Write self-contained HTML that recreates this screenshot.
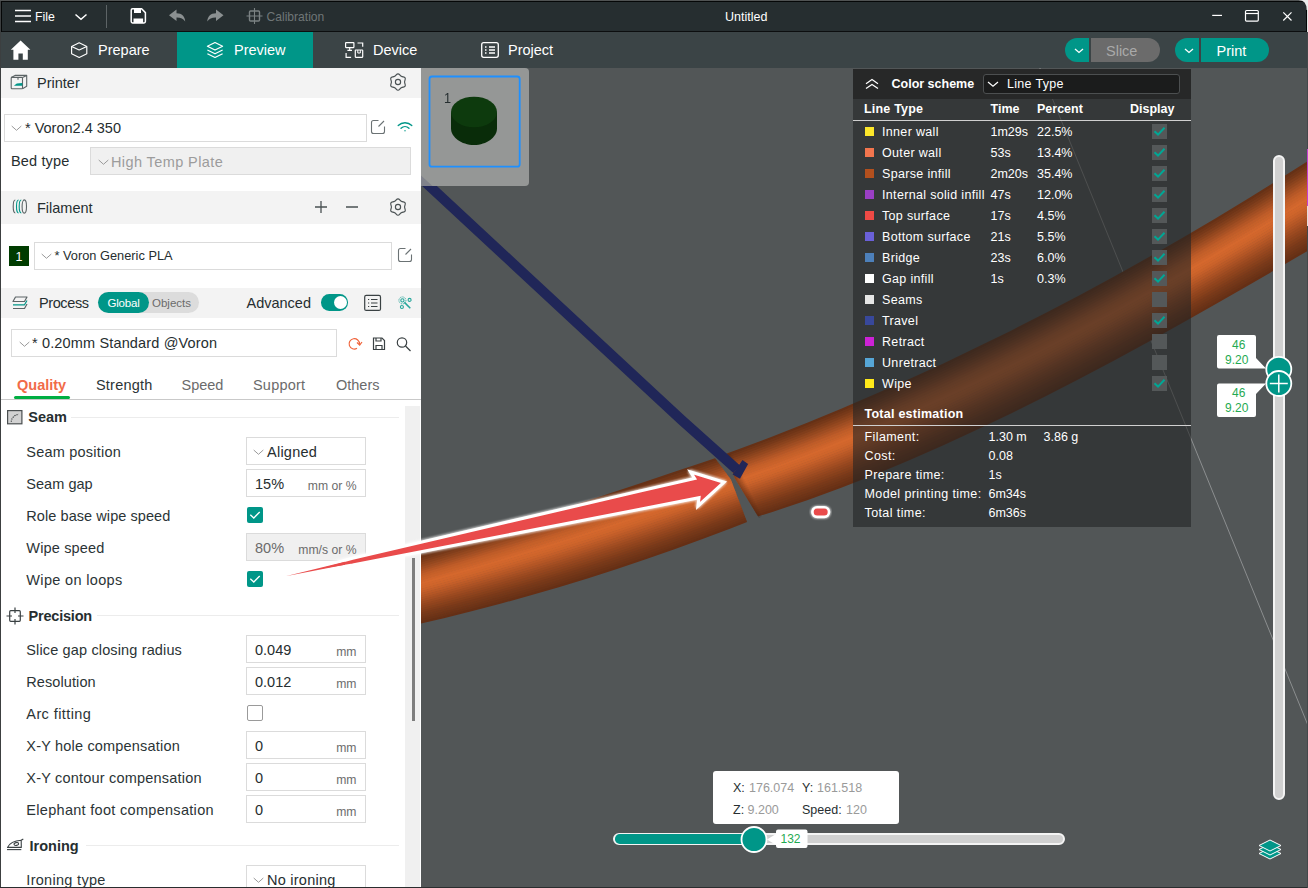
<!DOCTYPE html>
<html><head><meta charset="utf-8"><title>Untitled</title>
<style>
*{box-sizing:border-box;margin:0;padding:0}
html,body{width:1308px;height:888px;overflow:hidden;background:#525657;font-family:"Liberation Sans",sans-serif;color:#262e30}
.abs{position:absolute}
#titlebar{position:absolute;left:0;top:0;width:1308px;height:32px;background:#262e30;border-bottom:1px solid #0c0e0f}
#tabbar{position:absolute;left:0;top:32px;width:1308px;height:36px;background:#3b4446}
#side{position:absolute;left:0;top:68px;width:421px;height:820px;background:#fff;overflow:hidden}
#canvas{position:absolute;left:421px;top:68px;width:887px;height:820px;background:#525657;overflow:hidden}
.t{position:absolute;white-space:nowrap;line-height:1}
.hdr{position:absolute;left:0;width:421px;height:30px;background:#f3f3f3}
.box{position:absolute;border:1px solid #dbdbdb;background:#fff}
.box.dis{background:#f0f0f0}
.lbl{position:absolute;left:24px;font-size:14.5px;color:#2b3436;white-space:nowrap;line-height:1}
.val{position:absolute;font-size:14.5px;color:#262e30;white-space:nowrap;line-height:1}
.unit{position:absolute;font-size:12.2px;color:#6b6b6b;white-space:nowrap;line-height:1}
.chk{position:absolute;width:16px;height:16px;border-radius:2px;background:#009688}
.chk.off{background:#fff;border:1px solid #9a9a9a}
.sec{position:absolute;font-weight:bold;font-size:14.5px;color:#262e30;line-height:1;white-space:nowrap}
.hr{position:absolute;height:1px;background:#ececec}
</style></head><body>
<div id="titlebar">
<svg class="abs" style="left:0;top:0" width="340" height="32" viewBox="0 0 340 32" fill="none">
 <g stroke="#fff" stroke-width="1.6" stroke-linecap="butt"><path d="M15 10.5H31M15 16H31M15 21.5H31"/></g>
 <path d="M75.5 14.5L81 19.3L86.5 14.5" stroke="#fff" stroke-width="1.5"/>
 <path d="M106.5 5V28" stroke="#5d6466" stroke-width="1"/>
 <path d="M131.2 10.2Q131.2 8.8 132.6 8.8H141.6L145.4 12.6V21.6Q145.4 23 144 23H132.6Q131.2 23 131.2 21.6Z" stroke="#fff" stroke-width="1.5"/>
 <rect x="134" y="9" width="7" height="4" fill="#fff"/><rect x="133.5" y="18.5" width="9.6" height="4.5" fill="#fff"/>
 <path d="M169 15.2L176.5 9.6V13.2C182 13.2 185 16.5 185.2 21.6C183.4 18.6 180.6 17.4 176.5 17.5V21Z" fill="#8b9091"/>
 <path d="M223.5 15.2L216 9.6V13.2C210.500 13.2 207.5 16.5 207.3 21.6C209.100 18.6 211.9 17.4 216 17.500V21Z" fill="#8b9091"/>
 <g stroke="#7b8283" stroke-width="1.4"><rect x="249.500" y="11" width="10" height="10" rx="1"/><path d="M254.500 8V24M246.500 16H262.500" stroke-width="1.100"/></g>
</svg>
<div class="t" style="left:35px;top:10.5px;font-size:12.3px;color:#fff">File</div>
<div class="t" style="left:266.500px;top:11px;font-size:12.1px;color:#6f7677">Calibration</div>
<div class="t" style="left:725px;top:11px;font-size:12.5px;color:#fff">Untitled</div>
<svg class="abs" style="left:1200px;top:0" width="108" height="32" viewBox="0 0 108 32" fill="none" stroke="#fff" stroke-width="1.2">
 <path d="M12.200 15.400H22"/><rect x="45.500" y="10.500" width="12.800" height="10.600" rx="1"/><path d="M45.500 13.500H58.300"/><path d="M83.300 12.300L91.500 20.500M91.500 12.300L83.300 20.500"/>
</svg>
</div>
<div id="tabbar">
<div class="abs" style="left:177px;top:0;width:136px;height:36px;background:#009688"></div>
<svg class="abs" style="left:0;top:0" width="600" height="36" viewBox="0 0 600 36" fill="none">
 <path d="M20.600 8.600L30.400 17.800H27.800V27.800H22.800V21.500H18.400V27.800H13.400V17.800H10.800Z" fill="#fff"/>
 <g stroke="#fff" stroke-width="1.150" stroke-linejoin="round"><path d="M79.200 10.800L86.800 14.400V21.800L79.200 25.400L71.600 21.800V14.400Z"/><path d="M71.600 14.400L79.200 18L86.800 14.400"/></g>
 <g stroke="#fff" stroke-width="1.150" stroke-linejoin="round"><path d="M215 10.500L222.600 14.300L215 18.100L207.400 14.300Z"/><path d="M207.400 18L215 21.800L222.600 18"/><path d="M207.400 21.700L215 25.500L222.600 21.700"/></g>
 <g stroke="#fff" stroke-width="1.200"><rect x="345.600" y="10.600" width="8.300" height="5" rx="0.500"/><path d="M349.700 15.600V18.400M347.400 18.400H352"/><rect x="355.300" y="18" width="7.400" height="7.300" rx="0.500"/><path d="M357.800 18V21H360.300V18" stroke-width="1"/><path d="M357.500 11H362.700V14.700M346.100 21.100V25.300H351.100"/></g>
 <g stroke="#fff" stroke-width="1.300"><rect x="481.700" y="10.700" width="16.600" height="14.600" rx="2"/><path d="M485 15H486.500M485 18H486.500M485 21H486.500M489 15H495M489 18H495M489 21H495"/></g>
</svg>
<div class="t" style="left:98px;top:11.300px;font-size:14.500px;color:#fff">Prepare</div>
<div class="t" style="left:234px;top:11.300px;font-size:14.500px;color:#fff">Preview</div>
<div class="t" style="left:373px;top:11.300px;font-size:14.500px;color:#fff">Device</div>
<div class="t" style="left:508px;top:11.300px;font-size:14.500px;color:#fff">Project</div>
<div class="abs" style="left:1065px;top:6px;width:24px;height:24px;background:#009688;border-radius:12px 0 0 12px"></div>
<div class="abs" style="left:1091px;top:6px;width:69px;height:24px;background:#6b6b6b;border-radius:0 12px 12px 0"></div>
<div class="abs" style="left:1175px;top:6px;width:24px;height:24px;background:#009688;border-radius:12px 0 0 12px"></div>
<div class="abs" style="left:1201px;top:6px;width:68px;height:24px;background:#009688;border-radius:0 12px 12px 0"></div>
<svg class="abs" style="left:1060px;top:0" width="160" height="36" viewBox="0 0 160 36" fill="none" stroke="#fff" stroke-width="1.300"><path d="M15 17L19 20.500L23 17"/><path d="M125 17L129 20.500L133 17"/></svg>
<div class="t" style="left:1106px;top:11.800px;font-size:14.500px;color:#a9a9a9">Slice</div>
<div class="t" style="left:1216.500px;top:11.800px;font-size:14.500px;color:#fff">Print</div>
</div>
<div id="side">
<div class="hdr" style="top:0;height:30px"></div>
<div class="t" style="left:37px;top:8px;font-size:14.5px;color:#262e30;">Printer</div>
<svg class="abs" style="left:8px;top:5px" width="22" height="20" viewBox="0 0 22 20" fill="none" stroke="#5c6466" stroke-width="1.100" stroke-linejoin="round"><rect x="3.200" y="4.400" width="11.300" height="11.300" rx="0.800"/><path d="M3.200 4.400L7 2.400H18.700V13.300L14.500 15.700M14.500 4.400L18.700 2.400"/><path d="M5.900 12.700L8.800 10.500L14.300 10.100V12.700Z" fill="#009688" stroke="none"/><path d="M10 4.400V6.800" stroke="#5c6466"/></svg>
<svg class="abs" style="left:389px;top:5px" width="18" height="18" viewBox="0 0 18 18" fill="none" stroke="#4a5153" stroke-width="1.150"><path d="M9.00 0.80C7.46 0.80 7.36 2.33 5.70 3.28C4.04 4.24 2.67 3.57 1.90 4.90C1.13 6.23 2.40 7.09 2.40 9.00C2.40 10.91 1.13 11.77 1.90 13.10C2.67 14.43 4.04 13.76 5.70 14.72C7.36 15.67 7.46 17.20 9.00 17.20C10.54 17.20 10.64 15.67 12.30 14.72C13.96 13.76 15.33 14.43 16.10 13.10C16.87 11.77 15.60 10.91 15.60 9.00C15.60 7.09 16.87 6.23 16.10 4.90C15.33 3.57 13.96 4.24 12.30 3.28C10.64 2.33 10.54 0.80 9.00 0.80Z"/><circle cx="9" cy="9" r="2.600"/></svg>
<div class="box " style="left:4px;top:46px;width:363px;height:28px"></div>
<svg class="abs" style="left:11px;top:57px" width="12" height="7" viewBox="0 0 12 7" fill="none" stroke="#9a9a9a" stroke-width="1"><path d="M0.700 1L5.500 5.300L10.300 1"/></svg>
<div class="t" style="left:25px;top:53px;font-size:14.5px;color:#262e30;">* Voron2.4 350</div>
<svg class="abs" style="left:370px;top:51px" width="16" height="16" viewBox="0 0 16 16" fill="none" stroke="#6b7274" stroke-width="1.100"><path d="M8.500 1.500H3.500Q1.500 1.500 1.500 3.500V12.500Q1.500 14.500 3.500 14.500H12.500Q14.500 14.500 14.500 12.500V7.500"/><path d="M8.500 7.500L14 2"/></svg>
<svg class="abs" style="left:397px;top:53px" width="16" height="12" viewBox="0 0 16 12" fill="none" stroke="#009688" stroke-width="1.300" stroke-linecap="round"><path d="M1.200 4.500C5 0.800 11 0.800 14.800 4.500"/><path d="M4 7.200C6.300 5 9.700 5 12 7.200"/><circle cx="8" cy="9.800" r="0.700" fill="#009688" stroke="none"/></svg>
<div class="t" style="left:11px;top:86px;font-size:14.5px;color:#262e30;letter-spacing:0.15px">Bed type</div>
<div class="box dis" style="left:90px;top:79px;width:321px;height:28px"></div>
<svg class="abs" style="left:97.5px;top:90.5px" width="12" height="7" viewBox="0 0 12 7" fill="none" stroke="#9a9a9a" stroke-width="1"><path d="M0.700 1L5.500 5.300L10.300 1"/></svg>
<div class="t" style="left:111px;top:86.5px;font-size:14.5px;color:#9c9c9c;letter-spacing:0.4px">High Temp Plate</div>
<div class="hdr" style="top:123px;height:32.500px"></div>
<div class="t" style="left:37px;top:132.5px;font-size:14.5px;color:#262e30;">Filament</div>
<svg class="abs" style="left:11px;top:130px" width="18" height="17" viewBox="0 0 18 17" fill="none" stroke-width="1.100"><path d="M4.300 2C2.700 2 2.200 5.200 2.200 8.500C2.200 11.800 2.700 15 4.300 15" stroke="#5c6466"/><path d="M7.600 2C6 2 5.500 5.200 5.500 8.500C5.500 11.800 6 15 7.600 15" stroke="#009688"/><path d="M10.300 2C8.700 2 8.200 5.200 8.200 8.500C8.200 11.800 8.700 15 10.300 15" stroke="#009688"/><ellipse cx="13.300" cy="8.500" rx="2.200" ry="6.600" stroke="#5c6466"/></svg>
<svg class="abs" style="left:312px;top:130px" width="50" height="18" viewBox="0 0 50 18" fill="none" stroke="#4a5153" stroke-width="1.300"><path d="M3 9H15M9 3V15M34 9H46"/></svg>
<svg class="abs" style="left:389px;top:130px" width="18" height="18" viewBox="0 0 18 18" fill="none" stroke="#4a5153" stroke-width="1.150"><path d="M9.00 0.80C7.46 0.80 7.36 2.33 5.70 3.28C4.04 4.24 2.67 3.57 1.90 4.90C1.13 6.23 2.40 7.09 2.40 9.00C2.40 10.91 1.13 11.77 1.90 13.10C2.67 14.43 4.04 13.76 5.70 14.72C7.36 15.67 7.46 17.20 9.00 17.20C10.54 17.20 10.64 15.67 12.30 14.72C13.96 13.76 15.33 14.43 16.10 13.10C16.87 11.77 15.60 10.91 15.60 9.00C15.60 7.09 16.87 6.23 16.10 4.90C15.33 3.57 13.96 4.24 12.30 3.28C10.64 2.33 10.54 0.80 9.00 0.80Z"/><circle cx="9" cy="9" r="2.600"/></svg>
<div class="abs" style="left:9px;top:178px;width:20px;height:20px;background:#003c00"></div>
<div class="t" style="left:15.5px;top:182.5px;font-size:12.5px;color:#fff;">1</div>
<div class="box " style="left:34px;top:174px;width:358px;height:28px"></div>
<svg class="abs" style="left:41px;top:185px" width="12" height="7" viewBox="0 0 12 7" fill="none" stroke="#9a9a9a" stroke-width="1"><path d="M0.700 1L5.500 5.300L10.300 1"/></svg>
<div class="t" style="left:54.5px;top:182px;font-size:12.8px;color:#262e30;">* Voron Generic PLA</div>
<svg class="abs" style="left:397px;top:179px" width="16" height="16" viewBox="0 0 16 16" fill="none" stroke="#6b7274" stroke-width="1.100"><path d="M8.500 1.500H3.500Q1.500 1.500 1.500 3.500V12.500Q1.500 14.500 3.500 14.500H12.500Q14.500 14.500 14.500 12.500V7.500"/><path d="M8.500 7.500L14 2"/></svg>
<div class="hdr" style="top:220px;height:29.500px"></div>
<svg class="abs" style="left:11px;top:226px" width="18" height="18" viewBox="0 0 18 18" fill="none" stroke-width="1.200" stroke-linejoin="round"><path d="M4.500 3H16L13.500 7.500H2Z" stroke="#5c6466"/><path d="M2 10.800H13.500L16 6.500" stroke="#009688"/><path d="M2 14.500H13.500L16 10" stroke="#5c6466"/></svg>
<div class="t" style="left:39px;top:228px;font-size:14.5px;color:#262e30;letter-spacing:-0.4px">Process</div>
<div class="abs" style="left:97.5px;top:224px;width:101.500px;height:21px;border-radius:10.500px;background:#dcdcdc"></div>
<div class="abs" style="left:97.5px;top:224px;width:51.500px;height:21px;border-radius:10.500px;background:#009688"></div>
<div class="t" style="left:107.5px;top:229.5px;font-size:11.5px;color:#fff;letter-spacing:-0.2px">Global</div>
<div class="t" style="left:152px;top:229.5px;font-size:11.5px;color:#6b6b6b;">Objects</div>
<div class="t" style="left:246.5px;top:228px;font-size:14.5px;color:#262e30;">Advanced</div>
<div class="abs" style="left:321px;top:226px;width:27.200px;height:16.500px;border-radius:8.250px;background:#009688"></div>
<div class="abs" style="left:333.700px;top:227.5px;width:13px;height:13.500px;border-radius:6.750px;background:#fff"></div>
<svg class="abs" style="left:363px;top:225px" width="20" height="19" viewBox="0 0 20 19" fill="none" stroke="#3a4143" stroke-width="1.200"><rect x="1.700" y="2.400" width="15.800" height="15" rx="1.500"/><path d="M5 6.500H6.200M5 10H6.200M5 13.500H6.200M8 6.500H14.500M8 10H14.500M8 13.500H14.500"/></svg>
<svg class="abs" style="left:397px;top:227px" width="16" height="16" viewBox="0 0 16 16" fill="none" stroke="#26a69a" stroke-width="1.100"><circle cx="5.400" cy="5.400" r="1.600"/><circle cx="5.400" cy="5.400" r="3.500" stroke-width="0.900" stroke-dasharray="1.100 0.800"/><circle cx="12.600" cy="4.900" r="1.500"/><circle cx="4.900" cy="12" r="1.500"/><path d="M7.400 7.400L13.300 13.300" stroke-width="1.500"/></svg>
<div class="box " style="left:11px;top:261px;width:325.5px;height:28px"></div>
<svg class="abs" style="left:18.5px;top:272.5px" width="12" height="7" viewBox="0 0 12 7" fill="none" stroke="#9a9a9a" stroke-width="1"><path d="M0.700 1L5.500 5.300L10.300 1"/></svg>
<div class="t" style="left:32px;top:268px;font-size:14.5px;color:#262e30;letter-spacing:0.15px">* 0.20mm Standard @Voron</div>
<svg class="abs" style="left:346px;top:267px" width="70" height="18" viewBox="0 0 70 18" fill="none" stroke-width="1.200"><path d="M13.500 9A5.200 5.200 0 1 0 11 13.300" stroke="#f0643c"/><path d="M11 7.500L13.700 10.200L16 7" stroke="#f0643c"/><path d="M27.500 3H36L38.500 5.500V14.500H27.500Z" stroke="#3a4143"/><path d="M30 3V6H35V3M30 14.500V10.500H36V14.500" stroke="#3a4143"/><circle cx="56" cy="7.500" r="4.700" stroke="#3a4143"/><path d="M59.500 11L64.500 16" stroke="#3a4143"/></svg>
<div class="t" style="left:17px;top:309.5px;font-size:14.5px;color:#f16b48;font-weight:bold">Quality</div>
<div class="abs" style="left:14px;top:328px;width:56px;height:3px;border-radius:1.500px;background:#00ae42"></div>
<div class="t" style="left:96px;top:309.5px;font-size:14.5px;color:#2b3436;letter-spacing:0.2px">Strength</div>
<div class="t" style="left:181.5px;top:309.5px;font-size:14.5px;color:#6b6b6b;">Speed</div>
<div class="t" style="left:253px;top:309.5px;font-size:14.5px;color:#6b6b6b;letter-spacing:0.2px">Support</div>
<div class="t" style="left:336px;top:309.5px;font-size:14.5px;color:#6b6b6b;">Others</div>
<div class="abs" style="left:0;top:331px;width:421px;height:1px;background:#c9c9c9"></div>
<div class="abs" style="left:405px;top:338px;width:15px;height:490px;background:#f0f0f0"></div>
<div class="abs" style="left:412px;top:490px;width:2.500px;height:163px;background:#7d7d7d"></div>
<svg class="abs" style="left:7px;top:342px" width="16" height="15" viewBox="0 0 16 15" fill="none"><rect x="0.600" y="0.600" width="14.300" height="13.200" fill="#d2d2d2" stroke="#4a4f50" stroke-width="1.200"/><path d="M4.300 11.800C4.300 8 7 5.500 11.800 4" stroke="#33383a" stroke-width="1.100" stroke-dasharray="1.200 1.100"/></svg>
<div class="t" style="left:28.3px;top:342px;font-size:14.5px;color:#262e30;font-weight:bold">Seam</div>
<div class="hr" style="left:71px;top:348.9px;width:328px"></div>
<div class="t" style="left:26.3px;top:377px;font-size:14.5px;color:#2b3436;letter-spacing:0.22px">Seam position</div>
<div class="box " style="left:246px;top:369px;width:120px;height:28px"></div>
<svg class="abs" style="left:252.5px;top:380.5px" width="12" height="7" viewBox="0 0 12 7" fill="none" stroke="#9a9a9a" stroke-width="1"><path d="M0.700 1L5.500 5.300L10.300 1"/></svg>
<div class="t" style="left:267px;top:376.5px;font-size:14.5px;color:#262e30;letter-spacing:0.25px">Aligned</div>
<div class="t" style="left:26.3px;top:409px;font-size:14.5px;color:#2b3436;letter-spacing:0.04px">Seam gap</div>
<div class="box " style="left:246px;top:401px;width:120px;height:28px"></div>
<div class="t" style="left:255px;top:408.5px;font-size:14.5px;color:#262e30;">15%</div>
<div class="unit" style="right:64.5px;top:411.5px">mm or %</div>
<div class="t" style="left:26.3px;top:441px;font-size:14.5px;color:#2b3436;letter-spacing:0.07px">Role base wipe speed</div>
<div class="chk" style="left:247px;top:439px"><svg width="16" height="16" viewBox="0 0 16 16" fill="none" stroke="#fff" stroke-width="1.300"><path d="M3.300 7.800L6.800 11L12.700 5"/></svg></div>
<div class="t" style="left:26.3px;top:473px;font-size:14.5px;color:#2b3436;letter-spacing:0.16px">Wipe speed</div>
<div class="box dis" style="left:246px;top:465px;width:120px;height:28px"></div>
<div class="t" style="left:255px;top:472.5px;font-size:14.5px;color:#6b6b6b;">80%</div>
<div class="unit" style="right:64.5px;top:475.5px">mm/s or %</div>
<div class="t" style="left:26.3px;top:505px;font-size:14.5px;color:#2b3436;letter-spacing:0.34px">Wipe on loops</div>
<div class="chk" style="left:247px;top:503px"><svg width="16" height="16" viewBox="0 0 16 16" fill="none" stroke="#fff" stroke-width="1.300"><path d="M3.300 7.800L6.800 11L12.700 5"/></svg></div>
<svg class="abs" style="left:6px;top:539px" width="18" height="18" viewBox="0 0 18 18" fill="none" stroke="#3a4143" stroke-width="1.200"><rect x="3.700" y="3.700" width="10.600" height="10.600" rx="1"/><path d="M9 0.500V6M9 12V17.500M0.500 9H6M12 9H17.500"/></svg>
<div class="t" style="left:28.5px;top:541px;font-size:14.5px;color:#262e30;font-weight:bold;letter-spacing:-0.2px">Precision</div>
<div class="hr" style="left:97px;top:547px;width:302px"></div>
<div class="t" style="left:26.3px;top:575px;font-size:14.5px;color:#2b3436;letter-spacing:0.14px">Slice gap closing radius</div>
<div class="box " style="left:246px;top:567px;width:120px;height:28px"></div>
<div class="t" style="left:255px;top:574.5px;font-size:14.5px;color:#262e30;">0.049</div>
<div class="unit" style="right:64.5px;top:577.5px">mm</div>
<div class="t" style="left:26.3px;top:607px;font-size:14.5px;color:#2b3436;letter-spacing:0.09px">Resolution</div>
<div class="box " style="left:246px;top:599px;width:120px;height:28px"></div>
<div class="t" style="left:255px;top:606.5px;font-size:14.5px;color:#262e30;">0.012</div>
<div class="unit" style="right:64.5px;top:609.5px">mm</div>
<div class="t" style="left:26.3px;top:639px;font-size:14.5px;color:#2b3436;letter-spacing:0.41px">Arc fitting</div>
<div class="chk off" style="left:247px;top:637px"></div>
<div class="t" style="left:26.3px;top:671px;font-size:14.5px;color:#2b3436;letter-spacing:0.19px">X-Y hole compensation</div>
<div class="box " style="left:246px;top:663px;width:120px;height:28px"></div>
<div class="t" style="left:255px;top:670.5px;font-size:14.5px;color:#262e30;">0</div>
<div class="unit" style="right:64.5px;top:673.5px">mm</div>
<div class="t" style="left:26.3px;top:703px;font-size:14.5px;color:#2b3436;letter-spacing:0.2px">X-Y contour compensation</div>
<div class="box " style="left:246px;top:695px;width:120px;height:28px"></div>
<div class="t" style="left:255px;top:702.5px;font-size:14.5px;color:#262e30;">0</div>
<div class="unit" style="right:64.5px;top:705.5px">mm</div>
<div class="t" style="left:26.3px;top:735px;font-size:14.5px;color:#2b3436;letter-spacing:0.3px">Elephant foot compensation</div>
<div class="box " style="left:246px;top:727px;width:120px;height:28px"></div>
<div class="t" style="left:255px;top:734.5px;font-size:14.5px;color:#262e30;">0</div>
<div class="unit" style="right:64.5px;top:737.5px">mm</div>
<svg class="abs" style="left:6px;top:770px" width="19" height="13" viewBox="0 0 19 13" fill="none" stroke="#3a4143" stroke-width="1.100" stroke-linejoin="round"><path d="M1 11.600H15.300"/><path d="M1.500 9.400C3.500 5.200 8 2.600 15.200 2.200L15.300 9.400Z"/><ellipse cx="10.300" cy="6" rx="2.300" ry="1.400" transform="rotate(-12 10.300 6)"/><path d="M15.200 2.200L17.300 1"/></svg>
<div class="t" style="left:29.5px;top:771px;font-size:14.5px;color:#262e30;font-weight:bold">Ironing</div>
<div class="hr" style="left:86px;top:777px;width:313px"></div>
<div class="t" style="left:26.3px;top:805px;font-size:14.5px;color:#2b3436;letter-spacing:0.3px">Ironing type</div>
<div class="box " style="left:246px;top:797px;width:120px;height:28px"></div>
<svg class="abs" style="left:252.5px;top:808.5px" width="12" height="7" viewBox="0 0 12 7" fill="none" stroke="#9a9a9a" stroke-width="1"><path d="M0.700 1L5.500 5.300L10.300 1"/></svg>
<div class="t" style="left:267px;top:804.5px;font-size:14.5px;color:#262e30;letter-spacing:0.25px">No ironing</div>
</div>
<div id="canvas">
<svg class="abs" style="left:0;top:0" width="887" height="820" viewBox="0 0 887 820">
<path d="M617.2 -4L887.4 658.4" stroke="#9a9d9e" stroke-width="0.800" fill="none"/>
<defs><clipPath id="cL"><polygon points="-21.0,362.0 288.0,362.0 290.0,384.5 294.1,390.2 309.9,411.5 326.4,454.9 328.0,459.0 328.0,572.0 -21.0,572.0"/></clipPath><clipPath id="cR"><polygon points="303.5,372.0 305.8,386.8 313.6,410.0 338.0,450.0 340.0,453.5 340.0,472.0 899.0,472.0 899.0,32.0 303.5,32.0"/></clipPath></defs>
<g clip-path="url(#cL)">
<polygon points="-6.0,487.8 22.8,478.8 51.5,469.7 80.2,460.5 109.0,451.3 137.8,442.0 166.5,432.6 195.2,423.2 224.0,413.7 252.8,404.1 281.5,394.5 310.2,384.8 339.0,375.0 339.0,377.9 310.2,387.7 281.5,397.5 252.8,407.1 224.0,416.7 195.2,426.2 166.5,435.7 137.8,445.0 109.0,454.3 80.2,463.5 51.5,472.6 22.8,481.6 -6.0,490.5" fill="rgb(102,49,22)"/>
<polygon points="-6.0,489.9 22.8,481.0 51.5,472.0 80.2,462.9 109.0,453.7 137.8,444.4 166.5,435.1 195.2,425.6 224.0,416.1 252.8,406.5 281.5,396.9 310.2,387.1 339.0,377.3 339.0,380.2 310.2,390.1 281.5,399.9 252.8,409.6 224.0,419.2 195.2,428.7 166.5,438.1 137.8,447.4 109.0,456.7 80.2,465.8 51.5,474.9 22.8,483.8 -6.0,492.7" fill="rgb(111,53,23)"/>
<polygon points="-6.0,492.1 22.8,483.2 51.5,474.3 80.2,465.2 109.0,456.1 137.8,446.8 166.5,437.5 195.2,428.1 224.0,418.6 252.8,409.0 281.5,399.3 310.2,389.5 339.0,379.6 339.0,382.5 310.2,392.4 281.5,402.3 252.8,412.0 224.0,421.6 195.2,431.1 166.5,440.5 137.8,449.8 109.0,459.0 80.2,468.2 51.5,477.2 22.8,486.1 -6.0,494.9" fill="rgb(119,57,25)"/>
<polygon points="-6.0,494.3 22.8,485.5 51.5,476.6 80.2,467.6 109.0,458.4 137.8,449.2 166.5,439.9 195.2,430.5 224.0,421.0 252.8,411.4 281.5,401.7 310.2,391.8 339.0,381.9 339.0,384.8 310.2,394.8 281.5,404.6 252.8,414.4 224.0,424.0 195.2,433.5 166.5,443.0 137.8,452.2 109.0,461.4 80.2,470.5 51.5,479.5 22.8,488.3 -6.0,497.0" fill="rgb(129,62,27)"/>
<polygon points="-6.0,496.4 22.8,487.7 51.5,478.9 80.2,469.9 109.0,460.8 137.8,451.6 166.5,442.4 195.2,432.9 224.0,423.4 252.8,413.8 281.5,404.0 310.2,394.2 339.0,384.2 339.0,387.1 310.2,397.1 281.5,407.0 252.8,416.8 224.0,426.5 195.2,436.0 166.5,445.4 137.8,454.7 109.0,463.8 80.2,472.8 51.5,481.7 22.8,490.5 -6.0,499.2" fill="rgb(139,67,29)"/>
<polygon points="-6.0,498.6 22.8,489.9 51.5,481.1 80.2,472.2 109.0,463.2 137.8,454.1 166.5,444.8 195.2,435.4 224.0,425.9 252.8,416.2 281.5,406.4 310.2,396.5 339.0,386.5 339.0,389.4 310.2,399.5 281.5,409.4 252.8,419.2 224.0,428.9 195.2,438.4 166.5,447.8 137.8,457.1 109.0,466.2 80.2,475.2 51.5,484.0 22.8,492.8 -6.0,501.3" fill="rgb(149,72,31)"/>
<polygon points="-6.0,500.7 22.8,492.2 51.5,483.4 80.2,474.6 109.0,465.6 137.8,456.5 166.5,447.2 195.2,437.8 224.0,428.3 252.8,418.6 281.5,408.8 310.2,398.9 339.0,388.8 339.0,391.7 310.2,401.9 281.5,411.8 252.8,421.7 224.0,431.3 195.2,440.9 166.5,450.2 137.8,459.5 109.0,468.6 80.2,477.5 51.5,486.3 22.8,495.0 -6.0,503.5" fill="rgb(160,77,34)"/>
<polygon points="-6.0,502.9 22.8,494.4 51.5,485.7 80.2,476.9 109.0,468.0 137.8,458.9 166.5,449.6 195.2,440.3 224.0,430.7 252.8,421.1 281.5,411.2 310.2,401.3 339.0,391.1 339.0,394.1 310.2,404.2 281.5,414.2 252.8,424.1 224.0,433.8 195.2,443.3 166.5,452.7 137.8,461.9 109.0,471.0 80.2,479.9 51.5,488.6 22.8,497.2 -6.0,505.7" fill="rgb(170,82,36)"/>
<polygon points="-6.0,505.1 22.8,496.6 51.5,488.0 80.2,479.3 109.0,470.4 137.8,461.3 166.5,452.1 195.2,442.7 224.0,433.2 252.8,423.5 281.5,413.6 310.2,403.6 339.0,393.5 339.0,396.4 310.2,406.6 281.5,416.6 252.8,426.5 224.0,436.2 195.2,445.7 166.5,455.1 137.8,464.3 109.0,473.3 80.2,482.2 51.5,490.9 22.8,499.4 -6.0,507.8" fill="rgb(181,87,38)"/>
<polygon points="-6.0,507.2 22.8,498.8 51.5,490.3 80.2,481.6 109.0,472.7 137.8,463.7 166.5,454.5 195.2,445.1 224.0,435.6 252.8,425.9 281.5,416.0 310.2,406.0 339.0,395.8 339.0,398.7 310.2,408.9 281.5,419.0 252.8,428.9 224.0,438.6 195.2,448.2 166.5,457.5 137.8,466.7 109.0,475.7 80.2,484.6 51.5,493.2 22.8,501.7 -6.0,510.0" fill="rgb(191,92,40)"/>
<polygon points="-6.0,509.4 22.8,501.1 51.5,492.6 80.2,484.0 109.0,475.1 137.8,466.1 166.5,456.9 195.2,447.6 224.0,438.0 252.8,428.3 281.5,418.4 310.2,408.3 339.0,398.1 339.0,401.0 310.2,411.3 281.5,421.4 252.8,431.3 224.0,441.1 195.2,450.6 166.5,460.0 137.8,469.1 109.0,478.1 80.2,486.9 51.5,495.5 22.8,503.9 -6.0,512.1" fill="rgb(197,96,41)"/>
<polygon points="-6.0,511.5 22.8,503.3 51.5,494.9 80.2,486.3 109.0,477.5 137.8,468.5 166.5,459.4 195.2,450.0 224.0,440.5 252.8,430.7 281.5,420.8 310.2,410.7 339.0,400.4 339.0,403.3 310.2,413.6 281.5,423.8 252.8,433.8 224.0,443.5 195.2,453.1 166.5,462.4 137.8,471.6 109.0,480.5 80.2,489.2 51.5,497.8 22.8,506.1 -6.0,514.3" fill="rgb(202,98,42)"/>
<polygon points="-6.0,513.7 22.8,505.5 51.5,497.2 80.2,488.6 109.0,479.9 137.8,471.0 166.5,461.8 195.2,452.5 224.0,442.9 252.8,433.2 281.5,423.2 310.2,413.0 339.0,402.7 339.0,405.6 310.2,416.0 281.5,426.2 252.8,436.2 224.0,445.9 195.2,455.5 166.5,464.8 137.8,474.0 109.0,482.9 80.2,491.6 51.5,500.1 22.8,508.4 -6.0,516.4" fill="rgb(208,101,44)"/>
<polygon points="-6.0,515.8 22.8,507.8 51.5,499.5 80.2,491.0 109.0,482.3 137.8,473.4 166.5,464.2 195.2,454.9 224.0,445.3 252.8,435.6 281.5,425.6 310.2,415.4 339.0,405.0 339.0,407.9 310.2,418.4 281.5,428.6 252.8,438.6 224.0,448.4 195.2,457.9 166.5,467.3 137.8,476.4 109.0,485.3 80.2,493.9 51.5,502.4 22.8,510.6 -6.0,518.6" fill="rgb(213,104,45)"/>
<polygon points="-6.0,518.0 22.8,510.0 51.5,501.8 80.2,493.3 109.0,484.7 137.8,475.8 166.5,466.7 195.2,457.3 224.0,447.8 252.8,438.0 281.5,428.0 310.2,417.8 339.0,407.3 339.0,410.2 310.2,420.7 281.5,431.0 252.8,441.0 224.0,450.8 195.2,460.4 166.5,469.7 137.8,478.8 109.0,487.7 80.2,496.3 51.5,504.7 22.8,512.8 -6.0,520.8" fill="rgb(210,102,44)"/>
<polygon points="-6.0,520.2 22.8,512.2 51.5,504.1 80.2,495.7 109.0,487.1 137.8,478.2 166.5,469.1 195.2,459.8 224.0,450.2 252.8,440.4 281.5,430.4 310.2,420.1 339.0,409.6 339.0,412.5 310.2,423.1 281.5,433.4 252.8,443.4 224.0,453.2 195.2,462.8 166.5,472.1 137.8,481.2 109.0,490.0 80.2,498.6 51.5,507.0 22.8,515.1 -6.0,522.9" fill="rgb(207,101,43)"/>
<polygon points="-6.0,522.3 22.8,514.5 51.5,506.4 80.2,498.0 109.0,489.4 137.8,480.6 166.5,471.5 195.2,462.2 224.0,452.6 252.8,442.8 281.5,432.8 310.2,422.5 339.0,411.9 339.0,414.8 310.2,425.4 281.5,435.8 252.8,445.9 224.0,455.7 195.2,465.2 166.5,474.6 137.8,483.6 109.0,492.4 80.2,501.0 51.5,509.3 22.8,517.3 -6.0,525.1" fill="rgb(202,98,42)"/>
<polygon points="-6.0,524.5 22.8,516.7 51.5,508.7 80.2,500.4 109.0,491.8 137.8,483.0 166.5,474.0 195.2,464.6 224.0,455.1 252.8,445.3 281.5,435.2 310.2,424.8 339.0,414.2 339.0,417.2 310.2,427.8 281.5,438.2 252.8,448.3 224.0,458.1 195.2,467.7 166.5,477.0 137.8,486.0 109.0,494.8 80.2,503.3 51.5,511.6 22.8,519.5 -6.0,527.2" fill="rgb(195,94,41)"/>
<polygon points="-6.0,526.6 22.8,518.9 51.5,511.0 80.2,502.7 109.0,494.2 137.8,485.4 166.5,476.4 195.2,467.1 224.0,457.5 252.8,447.7 281.5,437.6 310.2,427.2 339.0,416.6 339.0,419.5 310.2,430.2 281.5,440.6 252.8,450.7 224.0,460.5 195.2,470.1 166.5,479.4 137.8,488.4 109.0,497.2 80.2,505.7 51.5,513.8 22.8,521.8 -6.0,529.4" fill="rgb(187,90,39)"/>
<polygon points="-6.0,528.8 22.8,521.2 51.5,513.2 80.2,505.1 109.0,496.6 137.8,487.8 166.5,478.8 195.2,469.5 224.0,459.9 252.8,450.1 281.5,440.0 310.2,429.6 339.0,418.9 339.0,421.8 310.2,432.5 281.5,443.0 252.8,453.1 224.0,463.0 195.2,472.6 166.5,481.9 137.8,490.9 109.0,499.6 80.2,508.0 51.5,516.1 22.8,524.0 -6.0,531.6" fill="rgb(180,86,37)"/>
<polygon points="-6.0,531.0 22.8,523.4 51.5,515.5 80.2,507.4 109.0,499.0 137.8,490.3 166.5,481.3 195.2,472.0 224.0,462.4 252.8,452.5 281.5,442.4 310.2,431.9 339.0,421.2 339.0,424.1 310.2,434.9 281.5,445.4 252.8,455.5 224.0,465.4 195.2,475.0 166.5,484.3 137.8,493.3 109.0,502.0 80.2,510.3 51.5,518.4 22.8,526.2 -6.0,533.7" fill="rgb(172,82,36)"/>
<polygon points="-6.0,533.1 22.8,525.6 51.5,517.8 80.2,509.7 109.0,501.4 137.8,492.7 166.5,483.7 195.2,474.4 224.0,464.8 252.8,454.9 281.5,444.8 310.2,434.3 339.0,423.5 339.0,426.4 310.2,437.2 281.5,447.7 252.8,458.0 224.0,467.8 195.2,477.4 166.5,486.7 137.8,495.7 109.0,504.3 80.2,512.7 51.5,520.7 22.8,528.5 -6.0,535.9" fill="rgb(164,78,34)"/>
<polygon points="-6.0,535.3 22.8,527.9 51.5,520.1 80.2,512.1 109.0,503.7 137.8,495.1 166.5,486.1 195.2,476.8 224.0,467.2 252.8,457.4 281.5,447.1 310.2,436.6 339.0,425.8 339.0,428.7 310.2,439.6 281.5,450.1 252.8,460.4 224.0,470.3 195.2,479.9 166.5,489.1 137.8,498.1 109.0,506.7 80.2,515.0 51.5,523.0 22.8,530.7 -6.0,538.0" fill="rgb(156,74,32)"/>
<polygon points="-6.0,537.4 22.8,530.1 51.5,522.4 80.2,514.4 109.0,506.1 137.8,497.5 166.5,488.5 195.2,479.3 224.0,469.7 252.8,459.8 281.5,449.5 310.2,439.0 339.0,428.1 339.0,431.0 310.2,441.9 281.5,452.5 252.8,462.8 224.0,472.7 195.2,482.3 166.5,491.6 137.8,500.5 109.0,509.1 80.2,517.4 51.5,525.3 22.8,532.9 -6.0,540.2" fill="rgb(149,70,30)"/>
<polygon points="-6.0,539.6 22.8,532.3 51.5,524.7 80.2,516.8 109.0,508.5 137.8,499.9 166.5,491.0 195.2,481.7 224.0,472.1 252.8,462.2 281.5,451.9 310.2,441.3 339.0,430.4 339.0,433.3 310.2,444.3 281.5,454.9 252.8,465.2 224.0,475.2 195.2,484.8 166.5,494.0 137.8,502.9 109.0,511.5 80.2,519.7 51.5,527.6 22.8,535.1 -6.0,542.3" fill="rgb(142,67,29)"/>
<polygon points="-6.0,541.7 22.8,534.5 51.5,527.0 80.2,519.1 109.0,510.9 137.8,502.3 166.5,493.4 195.2,484.2 224.0,474.6 252.8,464.6 281.5,454.3 310.2,443.7 339.0,432.7 339.0,435.6 310.2,446.7 281.5,457.3 252.8,467.6 224.0,477.6 195.2,487.2 166.5,496.4 137.8,505.3 109.0,513.9 80.2,522.1 51.5,529.9 22.8,537.4 -6.0,544.5" fill="rgb(135,64,27)"/>
<polygon points="-6.0,543.9 22.8,536.8 51.5,529.3 80.2,521.5 109.0,513.3 137.8,504.7 166.5,495.8 195.2,486.6 224.0,477.0 252.8,467.0 281.5,456.7 310.2,446.1 339.0,435.0 339.0,438.0 310.2,449.0 281.5,459.7 252.8,470.1 224.0,480.0 195.2,489.6 166.5,498.9 137.8,507.7 109.0,516.3 80.2,524.4 51.5,532.2 22.8,539.6 -6.0,546.7" fill="rgb(128,60,26)"/>
<polygon points="-6.0,546.1 22.8,539.0 51.5,531.6 80.2,523.8 109.0,515.7 137.8,507.1 166.5,498.3 195.2,489.0 224.0,479.4 252.8,469.5 281.5,459.1 310.2,448.4 339.0,437.4 339.0,440.3 310.2,451.4 281.5,462.1 252.8,472.5 224.0,482.5 195.2,492.1 166.5,501.3 137.8,510.2 109.0,518.6 80.2,526.8 51.5,534.5 22.8,541.8 -6.0,548.8" fill="rgb(121,57,25)"/>
<polygon points="-6.0,548.2 22.8,541.2 51.5,533.9 80.2,526.2 109.0,518.0 137.8,509.6 166.5,500.7 195.2,491.5 224.0,481.9 252.8,471.9 281.5,461.5 310.2,450.8 339.0,439.7 339.0,442.6 310.2,453.7 281.5,464.5 252.8,474.9 224.0,484.9 195.2,494.5 166.5,503.7 137.8,512.6 109.0,521.0 80.2,529.1 51.5,536.8 22.8,544.1 -6.0,551.0" fill="rgb(116,55,24)"/>
<polygon points="-6.0,550.4 22.8,543.5 51.5,536.2 80.2,528.5 109.0,520.4 137.8,512.0 166.5,503.1 195.2,493.9 224.0,484.3 252.8,474.3 281.5,463.9 310.2,453.1 339.0,442.0 339.0,444.9 310.2,456.1 281.5,466.9 252.8,477.3 224.0,487.3 195.2,496.9 166.5,506.2 137.8,515.0 109.0,523.4 80.2,531.4 51.5,539.1 22.8,546.3 -6.0,553.1" fill="rgb(111,52,23)"/>
<polygon points="-6.0,552.5 22.8,545.7 51.5,538.5 80.2,530.8 109.0,522.8 137.8,514.4 166.5,505.6 195.2,496.3 224.0,486.7 252.8,476.7 281.5,466.3 310.2,455.5 339.0,444.3 339.0,447.2 310.2,458.4 281.5,469.3 252.8,479.7 224.0,489.8 195.2,499.4 166.5,508.6 137.8,517.4 109.0,525.8 80.2,533.8 51.5,541.4 22.8,548.5 -6.0,555.3" fill="rgb(106,50,22)"/>
<polygon points="-6.0,554.7 22.8,547.9 51.5,540.8 80.2,533.2 109.0,525.2 137.8,516.8 166.5,508.0 195.2,498.8 224.0,489.2 252.8,479.1 281.5,468.7 310.2,457.8 339.0,446.6 339.0,448.9 310.2,460.2 281.5,471.1 252.8,481.6 224.0,491.6 195.2,501.2 166.5,510.4 137.8,519.2 109.0,527.6 80.2,535.5 51.5,543.1 22.8,550.2 -6.0,556.9" fill="rgb(101,47,21)"/>
</g>
<g clip-path="url(#cR)">
<polygon points="284.0,393.4 318.1,381.1 352.1,368.2 386.2,354.7 420.2,340.7 454.3,326.1 488.3,311.0 522.4,295.4 556.4,279.1 590.5,262.4 624.6,245.0 658.6,227.2 692.7,208.7 726.7,189.8 760.8,170.2 794.8,150.2 828.9,129.5 862.9,108.3 897.0,86.6 897.0,90.0 862.9,111.7 828.9,132.8 794.8,153.4 760.8,173.5 726.7,193.0 692.7,212.0 658.6,230.4 624.6,248.2 590.5,265.6 556.4,282.3 522.4,298.5 488.3,314.2 454.3,329.2 420.2,343.8 386.2,357.7 352.1,371.1 318.1,384.0 284.0,396.2" fill="rgb(102,49,22)"/>
<polygon points="284.0,395.6 318.1,383.4 352.1,370.5 386.2,357.1 420.2,343.2 454.3,328.6 488.3,313.6 522.4,297.9 556.4,281.7 590.5,265.0 624.6,247.6 658.6,229.8 692.7,211.4 726.7,192.4 760.8,172.9 794.8,152.8 828.9,132.2 862.9,111.1 897.0,89.4 897.0,92.8 862.9,114.5 828.9,135.6 794.8,156.1 760.8,176.2 726.7,195.6 692.7,214.6 658.6,233.0 624.6,250.8 590.5,268.1 556.4,284.9 522.4,301.1 488.3,316.7 454.3,331.8 420.2,346.2 386.2,360.2 352.1,373.5 318.1,386.2 284.0,398.4" fill="rgb(111,53,23)"/>
<polygon points="284.0,397.8 318.1,385.6 352.1,372.9 386.2,359.6 420.2,345.6 454.3,331.2 488.3,316.1 522.4,300.5 556.4,284.3 590.5,267.5 624.6,250.2 658.6,232.4 692.7,214.0 726.7,195.0 760.8,175.6 794.8,155.5 828.9,135.0 862.9,113.9 897.0,92.2 897.0,95.6 862.9,117.2 828.9,138.3 794.8,158.8 760.8,178.8 726.7,198.3 692.7,217.2 658.6,235.6 624.6,253.5 590.5,270.7 556.4,287.5 522.4,303.6 488.3,319.2 454.3,334.3 420.2,348.7 386.2,362.6 352.1,375.9 318.1,388.5 284.0,400.6" fill="rgb(119,57,25)"/>
<polygon points="284.0,400.0 318.1,387.9 352.1,375.3 386.2,362.0 420.2,348.1 454.3,333.7 488.3,318.6 522.4,303.0 556.4,286.9 590.5,270.1 624.6,252.9 658.6,235.0 692.7,216.6 726.7,197.7 760.8,178.2 794.8,158.2 828.9,137.7 862.9,116.6 897.0,95.0 897.0,98.5 862.9,120.0 828.9,141.0 794.8,161.5 760.8,181.5 726.7,200.9 692.7,219.8 658.6,238.2 624.6,256.1 590.5,273.3 556.4,290.0 522.4,306.2 488.3,321.8 454.3,336.8 420.2,351.2 386.2,365.0 352.1,378.2 318.1,390.8 284.0,402.8" fill="rgb(129,62,27)"/>
<polygon points="284.0,402.2 318.1,390.2 352.1,377.6 386.2,364.4 420.2,350.6 454.3,336.2 488.3,321.2 522.4,305.6 556.4,289.4 590.5,272.7 624.6,255.5 658.6,237.6 692.7,219.2 726.7,200.3 760.8,180.9 794.8,160.9 828.9,140.4 862.9,119.4 897.0,97.9 897.0,101.3 862.9,122.7 828.9,143.7 794.8,164.2 760.8,184.1 726.7,203.6 692.7,222.5 658.6,240.8 624.6,258.7 590.5,275.9 556.4,292.6 522.4,308.8 488.3,324.3 454.3,339.3 420.2,353.7 386.2,367.4 352.1,380.6 318.1,393.1 284.0,405.0" fill="rgb(139,67,29)"/>
<polygon points="284.0,404.4 318.1,392.5 352.1,380.0 386.2,366.8 420.2,353.1 454.3,338.7 488.3,323.7 522.4,308.2 556.4,292.0 590.5,275.3 624.6,258.1 658.6,240.2 692.7,221.9 726.7,203.0 760.8,183.5 794.8,163.6 828.9,143.1 862.9,122.1 897.0,100.7 897.0,104.1 862.9,125.5 828.9,146.4 794.8,166.9 760.8,186.8 726.7,206.2 692.7,225.1 658.6,243.4 624.6,261.3 590.5,278.5 556.4,295.2 522.4,311.3 488.3,326.9 454.3,341.8 420.2,356.1 386.2,369.8 352.1,382.9 318.1,395.4 284.0,407.2" fill="rgb(149,72,31)"/>
<polygon points="284.0,406.6 318.1,394.8 352.1,382.3 386.2,369.2 420.2,355.5 454.3,341.2 488.3,326.3 522.4,310.7 556.4,294.6 590.5,277.9 624.6,260.7 658.6,242.8 692.7,224.5 726.7,205.6 760.8,186.2 794.8,166.3 828.9,145.8 862.9,124.9 897.0,103.5 897.0,106.9 862.9,128.3 828.9,149.2 794.8,169.6 760.8,189.5 726.7,208.8 692.7,227.7 658.6,246.1 624.6,263.9 590.5,281.1 556.4,297.8 522.4,313.9 488.3,329.4 454.3,344.3 420.2,358.6 386.2,372.3 352.1,385.3 318.1,397.7 284.0,409.4" fill="rgb(160,77,34)"/>
<polygon points="284.0,408.8 318.1,397.1 352.1,384.7 386.2,371.7 420.2,358.0 454.3,343.7 488.3,328.8 522.4,313.3 556.4,297.2 590.5,280.5 624.6,263.3 658.6,245.5 692.7,227.1 726.7,208.2 760.8,188.9 794.8,169.0 828.9,148.6 862.9,127.7 897.0,106.3 897.0,109.7 862.9,131.0 828.9,151.9 794.8,172.2 760.8,192.1 726.7,211.5 692.7,230.3 658.6,248.7 624.6,266.5 590.5,283.7 556.4,300.4 522.4,316.4 488.3,331.9 454.3,346.8 420.2,361.1 386.2,374.7 352.1,387.7 318.1,400.0 284.0,411.6" fill="rgb(170,82,36)"/>
<polygon points="284.0,411.0 318.1,399.4 352.1,387.1 386.2,374.1 420.2,360.5 454.3,346.2 488.3,331.3 522.4,315.8 556.4,299.8 590.5,283.1 624.6,265.9 658.6,248.1 692.7,229.7 726.7,210.9 760.8,191.5 794.8,171.6 828.9,151.3 862.9,130.4 897.0,109.1 897.0,112.5 862.9,133.8 828.9,154.6 794.8,174.9 760.8,194.8 726.7,214.1 692.7,233.0 658.6,251.3 624.6,269.1 590.5,286.3 556.4,302.9 522.4,319.0 488.3,334.5 454.3,349.3 420.2,363.5 386.2,377.1 352.1,390.0 318.1,402.3 284.0,413.8" fill="rgb(181,87,38)"/>
<polygon points="284.0,413.2 318.1,401.7 352.1,389.4 386.2,376.5 420.2,362.9 454.3,348.7 488.3,333.9 522.4,318.4 556.4,302.3 590.5,285.7 624.6,268.5 658.6,250.7 692.7,232.4 726.7,213.5 760.8,194.2 794.8,174.3 828.9,154.0 862.9,133.2 897.0,111.9 897.0,115.4 862.9,136.6 828.9,157.3 794.8,177.6 760.8,197.4 726.7,216.8 692.7,235.6 658.6,253.9 624.6,271.7 590.5,288.9 556.4,305.5 522.4,321.6 488.3,337.0 454.3,351.8 420.2,366.0 386.2,379.5 352.1,392.4 318.1,404.5 284.0,416.0" fill="rgb(191,92,40)"/>
<polygon points="284.0,415.4 318.1,403.9 352.1,391.8 386.2,378.9 420.2,365.4 454.3,351.2 488.3,336.4 522.4,321.0 556.4,304.9 590.5,288.3 624.6,271.1 658.6,253.3 692.7,235.0 726.7,216.2 760.8,196.8 794.8,177.0 828.9,156.7 862.9,136.0 897.0,114.8 897.0,118.2 862.9,139.3 828.9,160.0 794.8,180.3 760.8,200.1 726.7,219.4 692.7,238.2 658.6,256.5 624.6,274.3 590.5,291.5 556.4,308.1 522.4,324.1 488.3,339.5 454.3,354.3 420.2,368.5 386.2,382.0 352.1,394.7 318.1,406.8 284.0,418.2" fill="rgb(197,96,41)"/>
<polygon points="284.0,417.6 318.1,406.2 352.1,394.1 386.2,381.4 420.2,367.9 454.3,353.7 488.3,338.9 522.4,323.5 556.4,307.5 590.5,290.9 624.6,273.7 658.6,255.9 692.7,237.6 726.7,218.8 760.8,199.5 794.8,179.7 828.9,159.4 862.9,138.7 897.0,117.6 897.0,121.0 862.9,142.1 828.9,162.8 794.8,183.0 760.8,202.8 726.7,222.0 692.7,240.8 658.6,259.1 624.6,276.9 590.5,294.1 556.4,310.7 522.4,326.7 488.3,342.1 454.3,356.8 420.2,370.9 386.2,384.4 352.1,397.1 318.1,409.1 284.0,420.4" fill="rgb(202,98,42)"/>
<polygon points="284.0,419.8 318.1,408.5 352.1,396.5 386.2,383.8 420.2,370.3 454.3,356.2 488.3,341.5 522.4,326.1 556.4,310.1 590.5,293.5 624.6,276.3 658.6,258.5 692.7,240.2 726.7,221.4 760.8,202.2 794.8,182.4 828.9,162.2 862.9,141.5 897.0,120.4 897.0,123.8 862.9,144.8 828.9,165.5 794.8,185.7 760.8,205.4 726.7,224.7 692.7,243.5 658.6,261.7 624.6,279.5 590.5,296.6 556.4,313.2 522.4,329.2 488.3,344.6 454.3,359.4 420.2,373.4 386.2,386.8 352.1,399.5 318.1,411.4 284.0,422.6" fill="rgb(208,101,44)"/>
<polygon points="284.0,422.0 318.1,410.8 352.1,398.9 386.2,386.2 420.2,372.8 454.3,358.8 488.3,344.0 522.4,328.6 556.4,312.6 590.5,296.0 624.6,278.9 658.6,261.1 692.7,242.9 726.7,224.1 760.8,204.8 794.8,185.1 828.9,164.9 862.9,144.2 897.0,123.2 897.0,126.6 862.9,147.6 828.9,168.2 794.8,188.4 760.8,208.1 726.7,227.3 692.7,246.1 658.6,264.4 624.6,282.1 590.5,299.2 556.4,315.8 522.4,331.8 488.3,347.2 454.3,361.9 420.2,375.9 386.2,389.2 352.1,401.8 318.1,413.7 284.0,424.8" fill="rgb(213,104,45)"/>
<polygon points="284.0,424.2 318.1,413.1 352.1,401.2 386.2,388.6 420.2,375.3 454.3,361.3 488.3,346.6 522.4,331.2 556.4,315.2 590.5,298.6 624.6,281.5 658.6,263.8 692.7,245.5 726.7,226.7 760.8,207.5 794.8,187.8 828.9,167.6 862.9,147.0 897.0,126.0 897.0,129.5 862.9,150.4 828.9,170.9 794.8,191.0 760.8,210.7 726.7,230.0 692.7,248.7 658.6,267.0 624.6,284.7 590.5,301.8 556.4,318.4 522.4,334.4 488.3,349.7 454.3,364.4 420.2,378.4 386.2,391.6 352.1,404.2 318.1,416.0 284.0,427.0" fill="rgb(210,102,44)"/>
<polygon points="284.0,426.4 318.1,415.4 352.1,403.6 386.2,391.0 420.2,377.8 454.3,363.8 488.3,349.1 522.4,333.8 556.4,317.8 590.5,301.2 624.6,284.1 658.6,266.4 692.7,248.1 726.7,229.4 760.8,210.1 794.8,190.4 828.9,170.3 862.9,149.8 897.0,128.9 897.0,132.3 862.9,153.1 828.9,173.6 794.8,193.7 760.8,213.4 726.7,232.6 692.7,251.3 658.6,269.6 624.6,287.3 590.5,304.4 556.4,321.0 522.4,336.9 488.3,352.2 454.3,366.9 420.2,380.8 386.2,394.1 352.1,406.6 318.1,418.3 284.0,429.2" fill="rgb(207,101,43)"/>
<polygon points="284.0,428.6 318.1,417.7 352.1,406.0 386.2,393.5 420.2,380.2 454.3,366.3 488.3,351.6 522.4,336.3 556.4,320.4 590.5,303.8 624.6,286.7 658.6,269.0 692.7,250.7 726.7,232.0 760.8,212.8 794.8,193.1 828.9,173.0 862.9,152.5 897.0,131.7 897.0,135.1 862.9,155.9 828.9,176.3 794.8,196.4 760.8,216.1 726.7,235.2 692.7,254.0 658.6,272.2 624.6,289.9 590.5,307.0 556.4,323.6 522.4,339.5 488.3,354.8 454.3,369.4 420.2,383.3 386.2,396.5 352.1,408.9 318.1,420.6 284.0,431.4" fill="rgb(202,98,42)"/>
<polygon points="284.0,430.8 318.1,420.0 352.1,408.3 386.2,395.9 420.2,382.7 454.3,368.8 488.3,354.2 522.4,338.9 556.4,323.0 590.5,306.4 624.6,289.3 658.6,271.6 692.7,253.4 726.7,234.6 760.8,215.5 794.8,195.8 828.9,175.7 862.9,155.3 897.0,134.5 897.0,137.9 862.9,158.7 828.9,179.1 794.8,199.1 760.8,218.7 726.7,237.9 692.7,256.6 658.6,274.8 624.6,292.5 590.5,309.6 556.4,326.1 522.4,342.0 488.3,357.3 454.3,371.9 420.2,385.8 386.2,398.9 352.1,411.3 318.1,422.8 284.0,433.6" fill="rgb(195,94,41)"/>
<polygon points="284.0,433.0 318.1,422.2 352.1,410.7 386.2,398.3 420.2,385.2 454.3,371.3 488.3,356.7 522.4,341.4 556.4,325.5 590.5,309.0 624.6,291.9 658.6,274.2 692.7,256.0 726.7,237.3 760.8,218.1 794.8,198.5 828.9,178.5 862.9,158.1 897.0,137.3 897.0,140.7 862.9,161.4 828.9,181.8 794.8,201.8 760.8,221.4 726.7,240.5 692.7,259.2 658.6,277.4 624.6,295.1 590.5,312.2 556.4,328.7 522.4,344.6 488.3,359.8 454.3,374.4 420.2,388.2 386.2,401.3 352.1,413.6 318.1,425.1 284.0,435.8" fill="rgb(187,90,39)"/>
<polygon points="284.0,435.2 318.1,424.5 352.1,413.0 386.2,400.7 420.2,387.6 454.3,373.8 488.3,359.2 522.4,344.0 556.4,328.1 590.5,311.6 624.6,294.5 658.6,276.8 692.7,258.6 726.7,239.9 760.8,220.8 794.8,201.2 828.9,181.2 862.9,160.8 897.0,140.1 897.0,143.5 862.9,164.2 828.9,184.5 794.8,204.5 760.8,224.0 726.7,243.2 692.7,261.8 658.6,280.0 624.6,297.7 590.5,314.8 556.4,331.3 522.4,347.2 488.3,362.4 454.3,376.9 420.2,390.7 386.2,403.8 352.1,416.0 318.1,427.4 284.0,438.0" fill="rgb(180,86,37)"/>
<polygon points="284.0,437.4 318.1,426.8 352.1,415.4 386.2,403.2 420.2,390.1 454.3,376.3 488.3,361.8 522.4,346.6 556.4,330.7 590.5,314.2 624.6,297.1 658.6,279.4 692.7,261.2 726.7,242.6 760.8,223.4 794.8,203.9 828.9,183.9 862.9,163.6 897.0,142.9 897.0,146.4 862.9,167.0 828.9,187.2 794.8,207.2 760.8,226.7 726.7,245.8 692.7,264.5 658.6,282.6 624.6,300.3 590.5,317.4 556.4,333.9 522.4,349.7 488.3,364.9 454.3,379.4 420.2,393.2 386.2,406.2 352.1,418.4 318.1,429.7 284.0,440.2" fill="rgb(172,82,36)"/>
<polygon points="284.0,439.6 318.1,429.1 352.1,417.8 386.2,405.6 420.2,392.6 454.3,378.8 488.3,364.3 522.4,349.1 556.4,333.3 590.5,316.8 624.6,299.7 658.6,282.0 692.7,263.9 726.7,245.2 760.8,226.1 794.8,206.6 828.9,186.6 862.9,166.4 897.0,145.8 897.0,149.2 862.9,169.7 828.9,189.9 794.8,209.8 760.8,229.4 726.7,248.4 692.7,267.1 658.6,285.3 624.6,302.9 590.5,320.0 556.4,336.4 522.4,352.3 488.3,367.5 454.3,381.9 420.2,395.7 386.2,408.6 352.1,420.7 318.1,432.0 284.0,442.4" fill="rgb(164,78,34)"/>
<polygon points="284.0,441.8 318.1,431.4 352.1,420.1 386.2,408.0 420.2,395.1 454.3,381.3 488.3,366.9 522.4,351.7 556.4,335.8 590.5,319.4 624.6,302.3 658.6,284.7 692.7,266.5 726.7,247.8 760.8,228.8 794.8,209.2 828.9,189.3 862.9,169.1 897.0,148.6 897.0,152.0 862.9,172.5 828.9,192.7 794.8,212.5 760.8,232.0 726.7,251.1 692.7,269.7 658.6,287.9 624.6,305.5 590.5,322.6 556.4,339.0 522.4,354.9 488.3,370.0 454.3,384.4 420.2,398.1 386.2,411.0 352.1,423.1 318.1,434.3 284.0,444.6" fill="rgb(156,74,32)"/>
<polygon points="284.0,444.0 318.1,433.7 352.1,422.5 386.2,410.4 420.2,397.5 454.3,383.8 488.3,369.4 522.4,354.3 556.4,338.4 590.5,322.0 624.6,304.9 658.6,287.3 692.7,269.1 726.7,250.5 760.8,231.4 794.8,211.9 828.9,192.1 862.9,171.9 897.0,151.4 897.0,154.8 862.9,175.2 828.9,195.4 794.8,215.2 760.8,234.7 726.7,253.7 692.7,272.3 658.6,290.5 624.6,308.1 590.5,325.1 556.4,341.6 522.4,357.4 488.3,372.5 454.3,386.9 420.2,400.6 386.2,413.4 352.1,425.4 318.1,436.6 284.0,446.8" fill="rgb(149,70,30)"/>
<polygon points="284.0,446.2 318.1,436.0 352.1,424.8 386.2,412.8 420.2,400.0 454.3,386.3 488.3,371.9 522.4,356.8 556.4,341.0 590.5,324.5 624.6,307.5 658.6,289.9 692.7,271.7 726.7,253.1 760.8,234.1 794.8,214.6 828.9,194.8 862.9,174.6 897.0,154.2 897.0,157.6 862.9,178.0 828.9,198.1 794.8,217.9 760.8,237.3 726.7,256.4 692.7,275.0 658.6,293.1 624.6,310.7 590.5,327.7 556.4,344.2 522.4,360.0 488.3,375.1 454.3,389.5 420.2,403.1 386.2,415.9 352.1,427.8 318.1,438.9 284.0,449.0" fill="rgb(142,67,29)"/>
<polygon points="284.0,448.4 318.1,438.3 352.1,427.2 386.2,415.3 420.2,402.5 454.3,388.9 488.3,374.5 522.4,359.4 556.4,343.6 590.5,327.1 624.6,310.1 658.6,292.5 692.7,274.4 726.7,255.8 760.8,236.7 794.8,217.3 828.9,197.5 862.9,177.4 897.0,157.0 897.0,160.4 862.9,180.8 828.9,200.8 794.8,220.6 760.8,240.0 726.7,259.0 692.7,277.6 658.6,295.7 624.6,313.3 590.5,330.3 556.4,346.8 522.4,362.5 488.3,377.6 454.3,392.0 420.2,405.5 386.2,418.3 352.1,430.2 318.1,441.1 284.0,451.2" fill="rgb(135,64,27)"/>
<polygon points="284.0,450.6 318.1,440.5 352.1,429.6 386.2,417.7 420.2,404.9 454.3,391.4 488.3,377.0 522.4,361.9 556.4,346.2 590.5,329.7 624.6,312.7 658.6,295.1 692.7,277.0 726.7,258.4 760.8,239.4 794.8,220.0 828.9,200.2 862.9,180.2 897.0,159.8 897.0,163.3 862.9,183.5 828.9,203.5 794.8,223.3 760.8,242.6 726.7,261.7 692.7,280.2 658.6,298.3 624.6,315.9 590.5,332.9 556.4,349.3 522.4,365.1 488.3,380.2 454.3,394.5 420.2,408.0 386.2,420.7 352.1,432.5 318.1,443.4 284.0,453.4" fill="rgb(128,60,26)"/>
<polygon points="284.0,452.8 318.1,442.8 352.1,431.9 386.2,420.1 420.2,407.4 454.3,393.9 488.3,379.6 522.4,364.5 556.4,348.7 590.5,332.3 624.6,315.3 658.6,297.7 692.7,279.6 726.7,261.1 760.8,242.0 794.8,222.7 828.9,202.9 862.9,182.9 897.0,162.7 897.0,166.1 862.9,186.3 828.9,206.3 794.8,226.0 760.8,245.3 726.7,264.3 692.7,282.8 658.6,300.9 624.6,318.5 590.5,335.5 556.4,351.9 522.4,367.7 488.3,382.7 454.3,397.0 420.2,410.5 386.2,423.1 352.1,434.9 318.1,445.7 284.0,455.6" fill="rgb(121,57,25)"/>
<polygon points="284.0,455.0 318.1,445.1 352.1,434.3 386.2,422.5 420.2,409.9 454.3,396.4 488.3,382.1 522.4,367.1 556.4,351.3 590.5,334.9 624.6,317.9 658.6,300.3 692.7,282.2 726.7,263.7 760.8,244.7 794.8,225.4 828.9,205.7 862.9,185.7 897.0,165.5 897.0,168.9 862.9,189.1 828.9,209.0 794.8,228.6 760.8,248.0 726.7,266.9 692.7,285.5 658.6,303.5 624.6,321.1 590.5,338.1 556.4,354.5 522.4,370.2 488.3,385.2 454.3,399.5 420.2,412.9 386.2,425.6 352.1,437.3 318.1,448.0 284.0,457.8" fill="rgb(116,55,24)"/>
<polygon points="284.0,457.2 318.1,447.4 352.1,436.7 386.2,425.0 420.2,412.3 454.3,398.9 488.3,384.6 522.4,369.6 556.4,353.9 590.5,337.5 624.6,320.5 658.6,302.9 692.7,284.9 726.7,266.3 760.8,247.4 794.8,228.0 828.9,208.4 862.9,188.5 897.0,168.3 897.0,171.7 862.9,191.8 828.9,211.7 794.8,231.3 760.8,250.6 726.7,269.6 692.7,288.1 658.6,306.2 624.6,323.7 590.5,340.7 556.4,357.1 522.4,372.8 488.3,387.8 454.3,402.0 420.2,415.4 386.2,428.0 352.1,439.6 318.1,450.3 284.0,460.0" fill="rgb(111,52,23)"/>
<polygon points="284.0,459.4 318.1,449.7 352.1,439.0 386.2,427.4 420.2,414.8 454.3,401.4 488.3,387.2 522.4,372.2 556.4,356.5 590.5,340.1 624.6,323.1 658.6,305.6 692.7,287.5 726.7,269.0 760.8,250.0 794.8,230.7 828.9,211.1 862.9,191.2 897.0,171.1 897.0,174.5 862.9,194.6 828.9,214.4 794.8,234.0 760.8,253.3 726.7,272.2 692.7,290.7 658.6,308.8 624.6,326.3 590.5,343.3 556.4,359.6 522.4,375.3 488.3,390.3 454.3,404.5 420.2,417.9 386.2,430.4 352.1,442.0 318.1,452.6 284.0,462.2" fill="rgb(106,50,22)"/>
<polygon points="284.0,461.6 318.1,452.0 352.1,441.4 386.2,429.8 420.2,417.3 454.3,403.9 488.3,389.7 522.4,374.7 556.4,359.0 590.5,342.7 624.6,325.7 658.6,308.2 692.7,290.1 726.7,271.6 760.8,252.7 794.8,233.4 828.9,213.8 862.9,194.0 897.0,173.9 897.0,176.8 862.9,196.7 828.9,216.5 794.8,236.1 760.8,255.3 726.7,274.3 692.7,292.7 658.6,310.8 624.6,328.3 590.5,345.3 556.4,361.6 522.4,377.3 488.3,392.2 454.3,406.4 420.2,419.8 386.2,432.2 352.1,443.7 318.1,454.3 284.0,463.8" fill="rgb(101,47,21)"/>
</g>
<defs><linearGradient id="sh" gradientUnits="userSpaceOnUse" x1="324" y1="430.5" x2="331.2" y2="427"><stop offset="0" stop-color="#3a1808" stop-opacity="0.5"/><stop offset="1" stop-color="#3a1808" stop-opacity="0"/></linearGradient></defs>
<polygon points="306.0,387.0 313.6,410.0 338.0,450.0 347.0,446.0 323.0,407.0 315.0,383.5" fill="url(#sh)"/>
<path d="M-8.8 102L260.6 352L315.7 401.3" stroke="#202658" stroke-width="10" fill="none" stroke-linejoin="round"/>
<polygon points="321.5,392.0 327.1,396.0 319.0,410.8 311.6,406.4" fill="#202658"/>
</svg>
<div class="abs" style="left:0;top:0;width:108px;height:118px;background:#959796;border-radius:0 4px 4px 0"></div>
<svg class="abs" style="left:0;top:0" width="110" height="120" viewBox="0 0 110 120"><rect x="8.500" y="8.500" width="90.200" height="90.200" rx="2.500" fill="none" stroke="#1e90ff" stroke-width="1.800"/><polygon points="0,107.500 11.500,118 0,118" fill="#202658" opacity="0.180"/></svg>
<div class="t" style="left:23px;top:22px;font-size:15px;color:#262e30;transform:scaleX(0.85);transform-origin:0 0">1</div>
<svg class="abs" style="left:28px;top:26px" width="52" height="54" viewBox="0 0 52 54"><path d="M2 18.500V34.500C2 43 12.300 51 25 51C37.700 51 48 43 48 34.500V18.500Z" fill="#092c09"/><ellipse cx="25" cy="18" rx="23" ry="15.300" fill="#0d3a0d"/></svg>
<div class="abs" style="left:432px;top:1px;width:338px;height:457.500px;background:rgba(35,37,36,0.6)"></div>
<div class="abs" style="left:432px;top:1px;width:338px;height:29.500px;background:#272828"></div>
<svg class="abs" style="left:443px;top:9px" width="16" height="13" viewBox="0 0 16 13" fill="none" stroke="#fff" stroke-width="1.200"><path d="M2 6.800L8 2.600L14 6.800M2 11.600L8 7.400L14 11.600"/></svg>
<div class="t" style="left:470.5px;top:10.07px;font-size:12.5px;color:#fff;font-weight:bold">Color scheme</div>
<div class="abs" style="left:561.5px;top:5.5px;width:197px;height:20.200px;background:#1b1c1c;border:1px solid #4c4f50;border-radius:3px"></div>
<svg class="abs" style="left:566px;top:12.5px" width="12" height="7" viewBox="0 0 12 7" fill="none" stroke="#fff" stroke-width="1.200"><path d="M1 1L6 5.300L11 1"/></svg>
<div class="t" style="left:586px;top:10.07px;font-size:12.5px;color:#fff;letter-spacing:0.3px">Line Type</div>
<div class="t" style="left:443px;top:35.07px;font-size:12.5px;color:#fff;font-weight:bold;letter-spacing:0.2px">Line Type</div>
<div class="t" style="left:569.5px;top:35.07px;font-size:12.5px;color:#fff;font-weight:bold">Time</div>
<div class="t" style="left:616px;top:35.07px;font-size:12.5px;color:#fff;font-weight:bold">Percent</div>
<div class="t" style="left:709px;top:35.07px;font-size:12.5px;color:#fff;font-weight:bold">Display</div>
<div class="abs" style="left:432px;top:52px;width:338px;height:1px;background:#d0d0d0"></div>
<div class="abs" style="left:443.7px;top:58.8px;width:9.500px;height:9.500px;background:#fce62a"></div>
<div class="t" style="left:461px;top:57.57px;font-size:12.5px;color:#fff;letter-spacing:0.33px">Inner wall</div>
<div class="t" style="left:569.5px;top:57.57px;font-size:12.5px;color:#fff;">1m29s</div>
<div class="t" style="left:616px;top:57.57px;font-size:12.5px;color:#fff;">22.5%</div>
<div class="abs" style="left:731px;top:56.0px;width:15px;height:15px;background:#545859"><svg width="15" height="15" viewBox="0 0 15 15" fill="none" stroke="#00a795" stroke-width="2"><path d="M2.500 7.300L6 10.600L12.500 3.800"/></svg></div>
<div class="abs" style="left:443.7px;top:79.8px;width:9.500px;height:9.500px;background:#f2754e"></div>
<div class="t" style="left:461px;top:78.57px;font-size:12.5px;color:#fff;letter-spacing:0.33px">Outer wall</div>
<div class="t" style="left:569.5px;top:78.57px;font-size:12.5px;color:#fff;">53s</div>
<div class="t" style="left:616px;top:78.57px;font-size:12.5px;color:#fff;">13.4%</div>
<div class="abs" style="left:731px;top:77.0px;width:15px;height:15px;background:#545859"><svg width="15" height="15" viewBox="0 0 15 15" fill="none" stroke="#00a795" stroke-width="2"><path d="M2.500 7.300L6 10.600L12.500 3.800"/></svg></div>
<div class="abs" style="left:443.7px;top:100.8px;width:9.500px;height:9.500px;background:#b3501e"></div>
<div class="t" style="left:461px;top:99.57px;font-size:12.5px;color:#fff;letter-spacing:0.33px">Sparse infill</div>
<div class="t" style="left:569.5px;top:99.57px;font-size:12.5px;color:#fff;">2m20s</div>
<div class="t" style="left:616px;top:99.57px;font-size:12.5px;color:#fff;">35.4%</div>
<div class="abs" style="left:731px;top:98.0px;width:15px;height:15px;background:#545859"><svg width="15" height="15" viewBox="0 0 15 15" fill="none" stroke="#00a795" stroke-width="2"><path d="M2.500 7.300L6 10.600L12.500 3.800"/></svg></div>
<div class="abs" style="left:443.7px;top:121.8px;width:9.500px;height:9.500px;background:#9a3fc4"></div>
<div class="t" style="left:461px;top:120.57px;font-size:12.5px;color:#fff;letter-spacing:0.33px">Internal solid infill</div>
<div class="t" style="left:569.5px;top:120.57px;font-size:12.5px;color:#fff;">47s</div>
<div class="t" style="left:616px;top:120.57px;font-size:12.5px;color:#fff;">12.0%</div>
<div class="abs" style="left:731px;top:119.0px;width:15px;height:15px;background:#545859"><svg width="15" height="15" viewBox="0 0 15 15" fill="none" stroke="#00a795" stroke-width="2"><path d="M2.500 7.300L6 10.600L12.500 3.800"/></svg></div>
<div class="abs" style="left:443.7px;top:142.8px;width:9.500px;height:9.500px;background:#ee4a45"></div>
<div class="t" style="left:461px;top:141.57px;font-size:12.5px;color:#fff;letter-spacing:0.33px">Top surface</div>
<div class="t" style="left:569.5px;top:141.57px;font-size:12.5px;color:#fff;">17s</div>
<div class="t" style="left:616px;top:141.57px;font-size:12.5px;color:#fff;">4.5%</div>
<div class="abs" style="left:731px;top:140.0px;width:15px;height:15px;background:#545859"><svg width="15" height="15" viewBox="0 0 15 15" fill="none" stroke="#00a795" stroke-width="2"><path d="M2.500 7.300L6 10.600L12.500 3.800"/></svg></div>
<div class="abs" style="left:443.7px;top:163.8px;width:9.500px;height:9.500px;background:#6a60d8"></div>
<div class="t" style="left:461px;top:162.57px;font-size:12.5px;color:#fff;letter-spacing:0.33px">Bottom surface</div>
<div class="t" style="left:569.5px;top:162.57px;font-size:12.5px;color:#fff;">21s</div>
<div class="t" style="left:616px;top:162.57px;font-size:12.5px;color:#fff;">5.5%</div>
<div class="abs" style="left:731px;top:161.0px;width:15px;height:15px;background:#545859"><svg width="15" height="15" viewBox="0 0 15 15" fill="none" stroke="#00a795" stroke-width="2"><path d="M2.500 7.300L6 10.600L12.500 3.800"/></svg></div>
<div class="abs" style="left:443.7px;top:184.8px;width:9.500px;height:9.500px;background:#4d80ba"></div>
<div class="t" style="left:461px;top:183.57px;font-size:12.5px;color:#fff;letter-spacing:0.33px">Bridge</div>
<div class="t" style="left:569.5px;top:183.57px;font-size:12.5px;color:#fff;">23s</div>
<div class="t" style="left:616px;top:183.57px;font-size:12.5px;color:#fff;">6.0%</div>
<div class="abs" style="left:731px;top:182.0px;width:15px;height:15px;background:#545859"><svg width="15" height="15" viewBox="0 0 15 15" fill="none" stroke="#00a795" stroke-width="2"><path d="M2.500 7.300L6 10.600L12.500 3.800"/></svg></div>
<div class="abs" style="left:443.7px;top:205.8px;width:9.500px;height:9.500px;background:#ffffff"></div>
<div class="t" style="left:461px;top:204.57px;font-size:12.5px;color:#fff;letter-spacing:0.33px">Gap infill</div>
<div class="t" style="left:569.5px;top:204.57px;font-size:12.5px;color:#fff;">1s</div>
<div class="t" style="left:616px;top:204.57px;font-size:12.5px;color:#fff;">0.3%</div>
<div class="abs" style="left:731px;top:203.0px;width:15px;height:15px;background:#545859"><svg width="15" height="15" viewBox="0 0 15 15" fill="none" stroke="#00a795" stroke-width="2"><path d="M2.500 7.300L6 10.600L12.500 3.800"/></svg></div>
<div class="abs" style="left:443.7px;top:226.8px;width:9.500px;height:9.500px;background:#e6e6e6"></div>
<div class="t" style="left:461px;top:225.57px;font-size:12.5px;color:#fff;letter-spacing:0.33px">Seams</div>
<div class="abs" style="left:731px;top:224.0px;width:15px;height:15px;background:#545859"></div>
<div class="abs" style="left:443.7px;top:247.8px;width:9.500px;height:9.500px;background:#38489b"></div>
<div class="t" style="left:461px;top:246.57px;font-size:12.5px;color:#fff;letter-spacing:0.33px">Travel</div>
<div class="abs" style="left:731px;top:245.0px;width:15px;height:15px;background:#545859"><svg width="15" height="15" viewBox="0 0 15 15" fill="none" stroke="#00a795" stroke-width="2"><path d="M2.500 7.300L6 10.600L12.500 3.800"/></svg></div>
<div class="abs" style="left:443.7px;top:268.8px;width:9.500px;height:9.500px;background:#cd22d6"></div>
<div class="t" style="left:461px;top:267.57px;font-size:12.5px;color:#fff;letter-spacing:0.33px">Retract</div>
<div class="abs" style="left:731px;top:266.0px;width:15px;height:15px;background:#545859"></div>
<div class="abs" style="left:443.7px;top:289.8px;width:9.500px;height:9.500px;background:#56a6d6"></div>
<div class="t" style="left:461px;top:288.57px;font-size:12.5px;color:#fff;letter-spacing:0.33px">Unretract</div>
<div class="abs" style="left:731px;top:287.0px;width:15px;height:15px;background:#545859"></div>
<div class="abs" style="left:443.7px;top:310.8px;width:9.500px;height:9.500px;background:#ffe91a"></div>
<div class="t" style="left:461px;top:309.57px;font-size:12.5px;color:#fff;letter-spacing:0.33px">Wipe</div>
<div class="abs" style="left:731px;top:308.0px;width:15px;height:15px;background:#545859"><svg width="15" height="15" viewBox="0 0 15 15" fill="none" stroke="#00a795" stroke-width="2"><path d="M2.500 7.300L6 10.600L12.500 3.800"/></svg></div>
<div class="t" style="left:443.5px;top:340.07px;font-size:12.5px;color:#fff;font-weight:bold;letter-spacing:0.25px">Total estimation</div>
<div class="abs" style="left:432px;top:356.5px;width:338px;height:1px;background:#d0d0d0"></div>
<div class="t" style="left:443.5px;top:363.07px;font-size:12.5px;color:#fff;letter-spacing:0.4px">Filament:</div>
<div class="t" style="left:567.5px;top:363.07px;font-size:12.5px;color:#fff;">1.30 m</div>
<div class="t" style="left:622.5px;top:363.07px;font-size:12.5px;color:#fff;">3.86 g</div>
<div class="t" style="left:443.5px;top:382.07px;font-size:12.5px;color:#fff;letter-spacing:0.4px">Cost:</div>
<div class="t" style="left:567.5px;top:382.07px;font-size:12.5px;color:#fff;">0.08</div>
<div class="t" style="left:443.5px;top:401.07px;font-size:12.5px;color:#fff;letter-spacing:0.4px">Prepare time:</div>
<div class="t" style="left:567.5px;top:401.07px;font-size:12.5px;color:#fff;">1s</div>
<div class="t" style="left:443.5px;top:420.07px;font-size:12.5px;color:#fff;letter-spacing:0.4px">Model printing time:</div>
<div class="t" style="left:567.5px;top:420.07px;font-size:12.5px;color:#fff;">6m34s</div>
<div class="t" style="left:443.5px;top:438.57px;font-size:12.5px;color:#fff;letter-spacing:0.4px">Total time:</div>
<div class="t" style="left:567.5px;top:438.57px;font-size:12.5px;color:#fff;">6m36s</div>
<div class="abs" style="left:852px;top:87px;width:12px;height:645.300px;border-radius:6px;background:#d0d0d0;border:2px solid #f4f4f4"></div>
<svg class="abs" style="left:795px;top:266px" width="52" height="36" viewBox="0 0 52 36"><path d="M3 1H38Q40 1 40 3V24L50 34.500H3Q1 34.500 1 32.500V3Q1 1 3 1Z" fill="#fff"/></svg>
<svg class="abs" style="left:795px;top:314px" width="52" height="36" viewBox="0 0 52 36"><path d="M3 35H38Q40 35 40 33V12L50 1.500H3Q1 1.500 1 3.500V33Q1 35 3 35Z" fill="#fff"/></svg>
<div class="t" style="left:811px;top:271.36px;font-size:12px;color:#1faa52;">46</div>
<div class="t" style="left:804px;top:286.36px;font-size:12px;color:#1faa52;">9.20</div>
<div class="t" style="left:811px;top:319.36px;font-size:12px;color:#1faa52;">46</div>
<div class="t" style="left:804px;top:333.86px;font-size:12px;color:#1faa52;">9.20</div>
<svg class="abs" style="left:843px;top:284px" width="30" height="46" viewBox="0 0 30 46"><circle cx="14.800" cy="17.300" r="12.500" fill="#009688" stroke="#fff" stroke-width="1.800"/><circle cx="14.800" cy="31.500" r="12.500" fill="#009688" stroke="#fff" stroke-width="1.800"/><path d="M14.800 22.500V40.500M5.800 31.500H23.800" stroke="#fff" stroke-width="1.500"/></svg>
<svg class="abs" style="left:835px;top:769px" width="28" height="26" viewBox="0 0 28 26" stroke="#fff" stroke-width="1" stroke-linejoin="round" fill="#009688"><path d="M14 11L25 16.500L14 22L3 16.500Z"/><path d="M14 7L25 12.500L14 18L3 12.500Z"/><path d="M14 3L25 8.500L14 14L3 8.500Z"/></svg>
<div class="abs" style="left:192px;top:764.5px;width:451.500px;height:12.500px;border-radius:6.250px;background:#d0d0d0;border:2px solid #f4f4f4"></div>
<div class="abs" style="left:193.5px;top:766px;width:140px;height:9.500px;border-radius:4.750px 0 0 4.750px;background:#009688"></div>
<svg class="abs" style="left:318px;top:757px" width="72" height="30" viewBox="0 0 72 30"><path d="M28 14.500L37 9V6.500Q37 4.500 39 4.500H66.500Q68.500 4.500 68.500 6.500V21Q68.500 23 66.500 23H39Q37 23 37 21V20Z" fill="#fff"/><circle cx="15" cy="14.500" r="12.500" fill="#009688" stroke="#fff" stroke-width="1.800"/></svg>
<div class="t" style="left:359.5px;top:765.36px;font-size:12px;color:#1faa52;">132</div>
<div class="abs" style="left:292px;top:702.5px;width:186px;height:53px;border-radius:3px;background:#fff"></div>
<div class="t" style="left:312px;top:714.07px;font-size:12.5px;color:#262e30;">X:</div><div class="t" style="left:328px;top:714.07px;font-size:12.5px;color:#9a9a9a;">176.074</div><div class="t" style="left:381px;top:714.07px;font-size:12.5px;color:#262e30;">Y:</div><div class="t" style="left:396px;top:714.07px;font-size:12.5px;color:#9a9a9a;">161.518</div>
<div class="t" style="left:312px;top:736.07px;font-size:12.5px;color:#262e30;">Z:</div><div class="t" style="left:326.5px;top:736.07px;font-size:12.5px;color:#9a9a9a;">9.200</div><div class="t" style="left:381px;top:736.07px;font-size:12.5px;color:#262e30;">Speed:</div><div class="t" style="left:425px;top:736.07px;font-size:12.5px;color:#9a9a9a;">120</div>
</div>
<svg class="abs" style="left:0;top:0;z-index:50;pointer-events:none" width="1308" height="888" viewBox="0 0 1308 888">
<defs><filter id="glow" x="-5%" y="-30%" width="110%" height="160%"><feGaussianBlur stdDeviation="1.200"/></filter></defs>
<polygon points="286.5,576.0 352.6,558.2 421.0,542.2 640.0,491.1 694.6,478.4 690.6,472.0 724.0,482.2 698.0,506.0 699.0,497.8 640.0,509.3 421.0,551.8 352.6,565.1" fill="none" stroke="#fff" stroke-width="5" stroke-linejoin="round" filter="url(#glow)" opacity="0.700"/>
<polygon points="286.5,576.0 352.6,558.2 421.0,542.2 640.0,491.1 694.6,478.4 690.6,472.0 724.0,482.2 698.0,506.0 699.0,497.8 640.0,509.3 421.0,551.8 352.6,565.1" fill="#e94b4b" stroke="#fff" stroke-width="3.100" stroke-linejoin="miter"/>
<polygon points="285.500,576.200 345,561.700 345,564.800" fill="#e94b4b"/>
<rect x="810.500" y="505.700" width="20.400" height="12.800" rx="6.400" fill="#fff" filter="url(#glow)" opacity="0.800"/>
<rect x="812.400" y="507.300" width="16.600" height="9.600" rx="4.800" fill="#e94b4b" stroke="#fff" stroke-width="2.600"/>
</svg>
<div class="abs" style="left:0;top:0;width:1px;height:888px;background:#3c3f40;z-index:60"></div>
<div class="abs" style="left:0;top:0;width:1308px;height:1px;background:#505353;z-index:60"></div>
<div class="abs" style="left:1px;top:1px;width:1306px;height:31px;border:1px solid #050707;border-bottom:none;z-index:60"></div>
<div class="abs" style="left:1306.600px;top:0;width:1.400px;height:888px;background:#44484a;z-index:61"></div>
<div class="abs" style="left:1306.600px;top:149px;width:1.400px;height:57px;background:#c43fd0;z-index:62"></div>
<div class="abs" style="left:1306.600px;top:206px;width:1.400px;height:20px;background:#e6dada;z-index:62"></div>
<div class="abs" style="left:0;top:886.500px;width:1308px;height:1.500px;background:#2a2d2e;z-index:60"></div>
<div class="abs" style="left:1306.600px;top:0;width:1.400px;height:32px;background:#e4e4e4;z-index:63"></div>
<svg class="abs" style="left:1298px;top:0;z-index:70" width="10" height="10" viewBox="0 0 10 10"><path d="M0.600 0H10V10H8.600Q8.600 0 0.600 0Z" fill="#ececec"/></svg>
</body></html>
